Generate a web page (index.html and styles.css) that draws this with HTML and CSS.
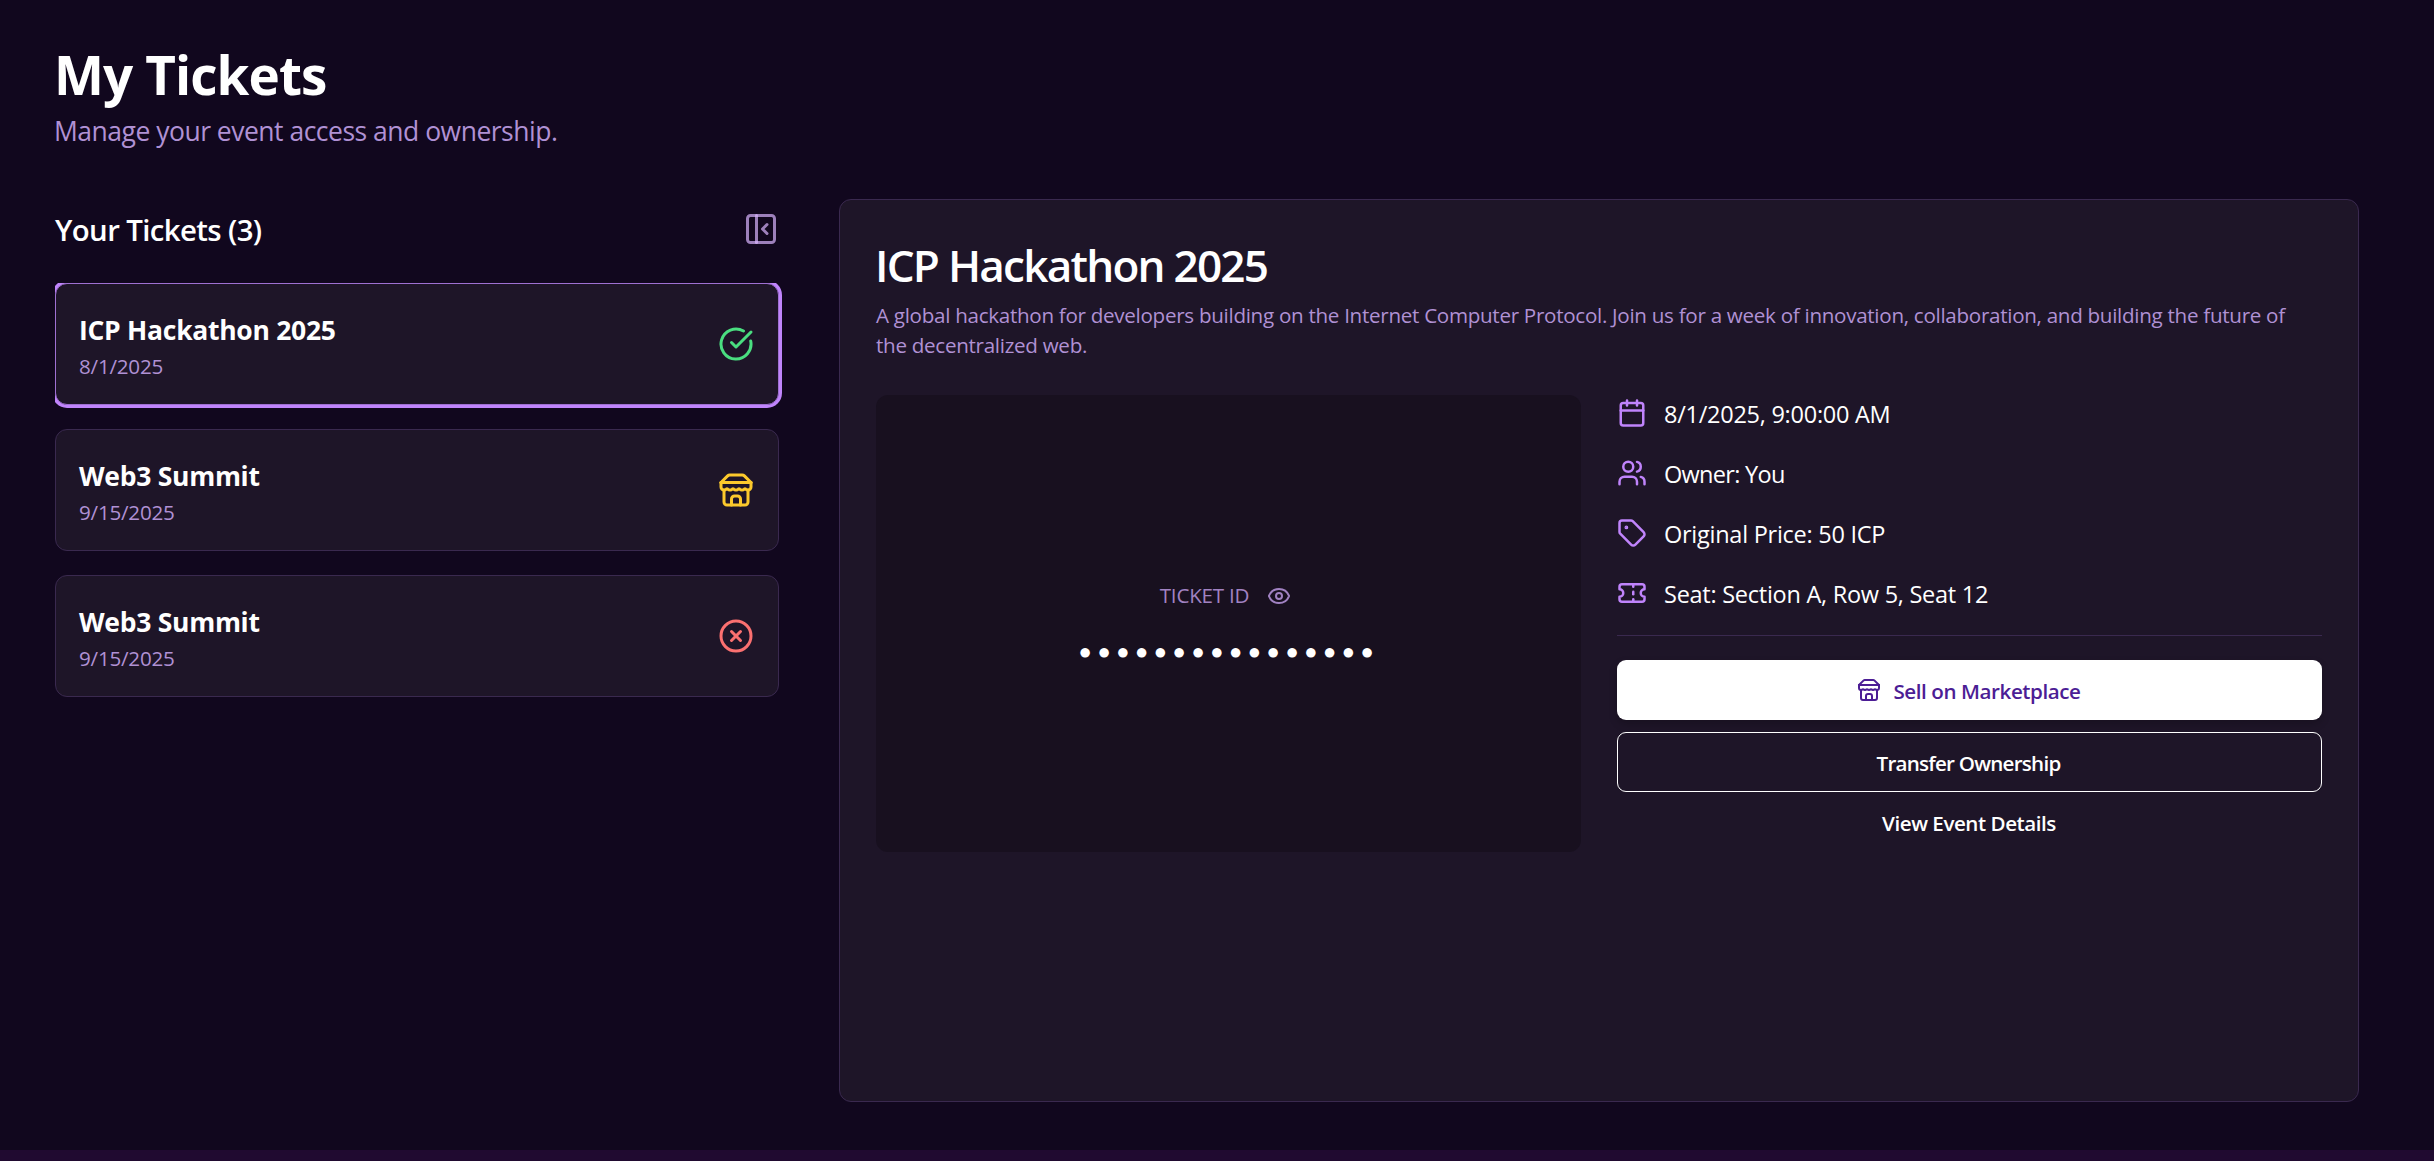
FILE: index.html
```html
<!DOCTYPE html>
<html lang="en">
<head>
<meta charset="utf-8">
<title>My Tickets</title>
<link rel="stylesheet" href="styles.css">
</head>
<body>
<svg class="sprite" aria-hidden="true">
  <symbol id="store" viewBox="0 0 24 24">
    <path d="m2 7 4.41-4.41A2 2 0 0 1 7.83 2h8.34a2 2 0 0 1 1.42.59L22 7"/>
    <path d="M4 12v8a2 2 0 0 0 2 2h12a2 2 0 0 0 2-2v-8"/>
    <path d="M15 22v-4a2 2 0 0 0-2-2h-2a2 2 0 0 0-2 2v4"/>
    <path d="M2 7h20"/>
    <path d="M22 7v3a2 2 0 0 1-2 2a2.7 2.7 0 0 1-1.59-.63.7.7 0 0 0-.82 0A2.7 2.7 0 0 1 16 12a2.7 2.7 0 0 1-1.59-.63.7.7 0 0 0-.82 0A2.7 2.7 0 0 1 12 12a2.7 2.7 0 0 1-1.59-.63.7.7 0 0 0-.82 0A2.7 2.7 0 0 1 8 12a2.7 2.7 0 0 1-1.59-.63.7.7 0 0 0-.82 0A2.7 2.7 0 0 1 4 12a2 2 0 0 1-2-2V7"/>
  </symbol>
</svg>
<main class="page">
  <header class="page-header">
    <h1 class="page-title">My Tickets</h1>
    <p class="page-subtitle">Manage your event access and ownership.</p>
  </header>
  <div class="columns">
    <section class="sidebar">
      <div class="sidebar-header">
        <h2 class="sidebar-title">Your Tickets (3)</h2>
        <button class="icon-button" aria-label="Collapse">
          <svg class="icon icon-lg" viewBox="0 0 24 24"><rect width="18" height="18" x="3" y="3" rx="2"/><path d="M9 3v18"/><path d="m16 15-3-3 3-3"/></svg>
        </button>
      </div>
      <div class="ticket-list">
        <article class="ticket ticket-selected">
          <div class="ticket-info">
            <h3 class="ticket-name">ICP Hackathon 2025</h3>
            <p class="ticket-date">8/1/2025</p>
          </div>
          <svg class="icon icon-lg status-valid" viewBox="0 0 24 24"><path d="M21.801 10A10 10 0 1 1 17 3.335"/><path d="m9 11 3 3L22 4"/></svg>
        </article>
        <article class="ticket">
          <div class="ticket-info">
            <h3 class="ticket-name">Web3 Summit</h3>
            <p class="ticket-date">9/15/2025</p>
          </div>
          <svg class="icon icon-lg status-listed"><use href="#store"/></svg>
        </article>
        <article class="ticket">
          <div class="ticket-info">
            <h3 class="ticket-name">Web3 Summit</h3>
            <p class="ticket-date">9/15/2025</p>
          </div>
          <svg class="icon icon-lg status-used" viewBox="0 0 24 24"><circle cx="12" cy="12" r="10"/><path d="m15 9-6 6"/><path d="m9 9 6 6"/></svg>
        </article>
      </div>
    </section>
    <section class="panel">
      <h2 class="panel-title">ICP Hackathon 2025</h2>
      <p class="panel-text">A global hackathon for developers building on the Internet Computer Protocol. Join us for a week of innovation, collaboration, and building the future of the decentralized web.</p>
      <div class="panel-grid">
        <div class="ticket-id">
          <div class="ticket-id-label">
            <span>TICKET ID</span>
            <button class="eye-button" aria-label="Show">
              <svg class="icon icon-sm" viewBox="0 0 24 24"><path d="M2.062 12.348a1 1 0 0 1 0-.696 10.75 10.75 0 0 1 19.876 0 1 1 0 0 1 0 .696 10.75 10.75 0 0 1-19.876 0"/><circle cx="12" cy="12" r="3"/></svg>
            </button>
          </div>
          <p class="ticket-id-value">●●●●●●●●●●●●●●●●</p>
        </div>
        <div class="details">
          <ul class="facts">
            <li class="fact"><svg class="icon icon-md" viewBox="0 0 24 24"><path d="M8 2v4"/><path d="M16 2v4"/><rect width="18" height="18" x="3" y="4" rx="2"/><path d="M3 10h18"/></svg><span>8/1/2025, 9:00:00 AM</span></li>
            <li class="fact fact-owner"><svg class="icon icon-md" viewBox="0 0 24 24"><path d="M16 21v-2a4 4 0 0 0-4-4H6a4 4 0 0 0-4 4v2"/><circle cx="9" cy="7" r="4"/><path d="M22 21v-2a4 4 0 0 0-3-3.87"/><path d="M16 3.13a4 4 0 0 1 0 7.75"/></svg><span>Owner: You</span></li>
            <li class="fact"><svg class="icon icon-md" viewBox="0 0 24 24"><path d="M12.586 2.586A2 2 0 0 0 11.172 2H4a2 2 0 0 0-2 2v7.172a2 2 0 0 0 .586 1.414l8.704 8.704a2.426 2.426 0 0 0 3.42 0l6.58-6.58a2.426 2.426 0 0 0 0-3.42z"/><circle cx="7.5" cy="7.5" r=".5" fill="currentColor"/></svg><span>Original Price: 50 ICP</span></li>
            <li class="fact"><svg class="icon icon-md" viewBox="0 0 24 24"><path d="M2 9a3 3 0 0 1 0 6v2a2 2 0 0 0 2 2h16a2 2 0 0 0 2-2v-2a3 3 0 0 1 0-6V7a2 2 0 0 0-2-2H4a2 2 0 0 0-2 2Z"/><path d="M13 5v2"/><path d="M13 17v2"/><path d="M13 11v2"/></svg><span>Seat: Section A, Row 5, Seat 12</span></li>
          </ul>
          <div class="actions">
            <button class="button button-primary"><svg class="icon icon-sm"><use href="#store"/></svg><span>Sell on Marketplace</span></button>
            <button class="button button-outline">Transfer Ownership</button>
            <button class="button button-link">View Event Details</button>
          </div>
        </div>
      </div>
    </section>
  </div>
</main>
</body>
</html>
```
FILE: styles.css
```css
* {
  box-sizing: border-box;
  margin: 0;
  padding: 0;
}

body {
  background: #200a30;
  color: #fff;
  font-family: "Open Sans", "Noto Sans", sans-serif;
  overflow: hidden;
}

button {
  border: 0;
  background: none;
  color: inherit;
  font: inherit;
}

.sprite {
  display: none;
}

.page {
  height: 1150px;
  padding: 45px 75px 48px 55px;
  background: #11071e;
}

.page-title {
  margin-left: -1px;
  font-size: 53px;
  font-weight: 700;
  line-height: 60px;
  letter-spacing: -0.9px;
}

.page-subtitle {
  margin: 5px 0 47px -1px;
  color: #b091d4;
  font-size: 26.5px;
  line-height: 42px;
  letter-spacing: -0.5px;
}

.columns {
  display: grid;
  grid-template-columns: 724px 1520px;
  column-gap: 60px;
  height: 903px;
}

.sidebar {
  padding-top: 12px;
}

.sidebar-header {
  display: flex;
  align-items: center;
  justify-content: space-between;
  height: 36px;
  margin-bottom: 36px;
}

.sidebar-title {
  padding-top: 2px;
  font-size: 29.4px;
  font-weight: 600;
  line-height: 36px;
  letter-spacing: -0.62px;
}

.icon {
  flex: none;
  fill: none;
  stroke: currentColor;
  stroke-width: 2;
  stroke-linecap: round;
  stroke-linejoin: round;
}

.icon-sm {
  width: 24px;
  height: 24px;
}

.icon-md {
  width: 30px;
  height: 30px;
}

.icon-lg {
  width: 36px;
  height: 36px;
}

.icon-button {
  display: flex;
  color: rgba(216, 180, 254, 0.7);
}

.ticket-list {
  display: grid;
  row-gap: 24px;
  margin-right: -3px;
  padding: 0 3px 3px 0;
  overflow: hidden;
}

.ticket {
  display: flex;
  align-items: center;
  justify-content: space-between;
  height: 122px;
  padding: 0 24px;
  border: 1px solid #3a294f;
  border-radius: 12px;
  background: #1e1528;
}

.ticket-selected {
  border-color: #9f70d2;
  box-shadow: 0 0 0 3px #c084fc;
}

.ticket-info {
  margin-left: -1px;
  padding-top: 2px;
}

.ticket-name {
  font-size: 26.5px;
  font-weight: 700;
  line-height: 42px;
  letter-spacing: -0.28px;
}

.ticket-date {
  color: #b091d4;
  font-size: 20.6px;
  line-height: 30px;
  letter-spacing: -0.22px;
}

.status-valid {
  color: #4ade80;
}

.status-listed {
  color: #fcc92c;
}

.status-used {
  color: #fb7070;
}

.panel {
  padding: 36px;
  border: 1px solid #3a294f;
  border-radius: 12px;
  background: #1e1528;
}

.panel-title {
  margin: 1px 0 6px -1px;
  font-size: 44.1px;
  font-weight: 600;
  line-height: 57px;
  letter-spacing: -1.77px;
}

.panel-text {
  max-width: 1420px;
  margin-bottom: 35px;
  color: #b091d4;
  font-size: 20.6px;
  line-height: 30px;
  letter-spacing: -0.288px;
}

.panel-grid {
  display: grid;
  grid-template-columns: 1fr 1fr;
  column-gap: 36px;
}

.ticket-id {
  display: flex;
  flex-direction: column;
  align-items: center;
  justify-content: center;
  gap: 25px;
  border-radius: 12px;
  background: #18101f;
}

.ticket-id-label {
  display: flex;
  align-items: center;
  gap: 12px;
  height: 36px;
  color: #a182c2;
  font-size: 20.6px;
  line-height: 30px;
  letter-spacing: -0.22px;
}

.ticket-id-label span {
  padding-bottom: 2px;
}

.eye-button {
  display: flex;
  padding: 6px;
}

.ticket-id-value {
  padding-left: 1px;
  font-family: "Liberation Mono", monospace;
  font-size: 22px;
  line-height: 30px;
  letter-spacing: 5.6px;
}

.facts {
  display: grid;
  row-gap: 24px;
  padding-bottom: 24px;
  border-bottom: 1px solid #3a294f;
  list-style: none;
}

.fact {
  display: flex;
  align-items: center;
  gap: 17px;
  height: 36px;
  font-size: 23.5px;
  line-height: 36px;
  letter-spacing: -0.26px;
}

.fact span {
  padding-top: 2px;
}

.fact-owner {
  letter-spacing: -0.7px;
}

.fact .icon {
  color: #c084fc;
}

.actions {
  display: flex;
  flex-direction: column;
  padding-top: 24px;
}

.button {
  display: flex;
  align-items: center;
  justify-content: center;
  gap: 12px;
  height: 60px;
  border-radius: 9px;
  font-size: 20.6px;
  font-weight: 600;
}

.button-primary {
  margin-bottom: 12px;
  padding-right: 1px;
  background: #fff;
  box-shadow: 0 4px 9px rgba(0, 0, 0, 0.2);
  color: #4c1d95;
  letter-spacing: -0.43px;
}

.button-primary span {
  padding-top: 2px;
}

.button-outline {
  padding: 2px 2px 0 0;
  border: 1px solid #fff;
  letter-spacing: -0.76px;
}

.button-link {
  padding: 2px 1px 0 0;
  letter-spacing: -0.46px;
}
```
